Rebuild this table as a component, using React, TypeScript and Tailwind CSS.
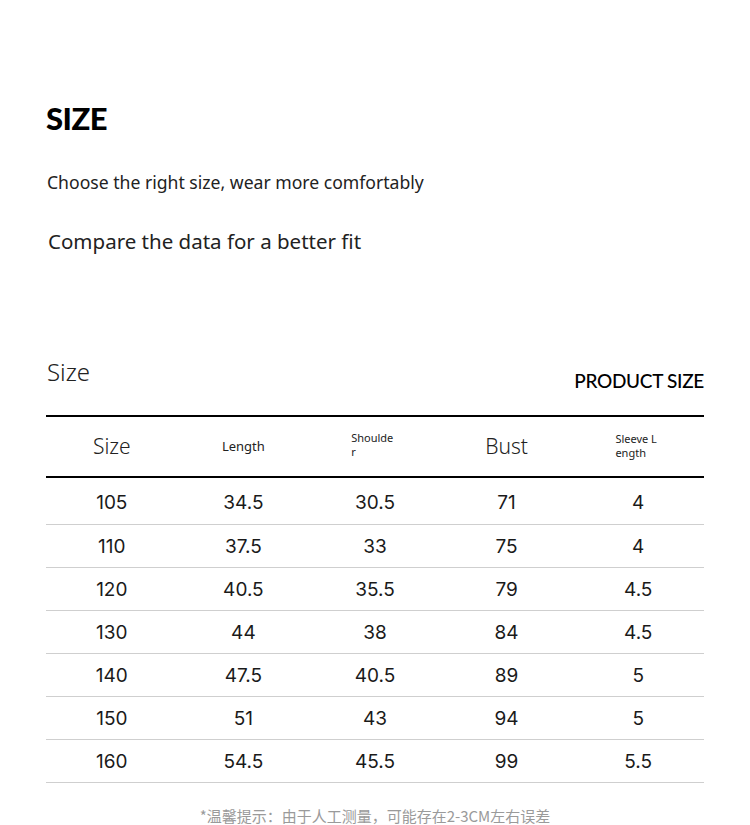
import React from "react";

const rows = [
  ["105", "34.5", "30.5", "71", "4"],
  ["110", "37.5", "33", "75", "4"],
  ["120", "40.5", "35.5", "79", "4.5"],
  ["130", "44", "38", "84", "4.5"],
  ["140", "47.5", "40.5", "89", "5"],
  ["150", "51", "43", "94", "5"],
  ["160", "54.5", "45.5", "99", "5.5"],
];

export default function App() {
  return (
    <div className="w-[750px] h-[825px] bg-white overflow-hidden relative text-[#1a1a1a]">
      <div className="px-[46px] pt-[100px]">
        <h1 className="text-[31px] leading-[36px] font-black tracking-[-0.5px] text-black" style={{ fontFamily: "Lato, sans-serif" }}>
          SIZE
        </h1>
        <p className="mt-[34px] ml-[1px] text-[17.6px] leading-[24px] text-[#222]" style={{ fontFamily: '"Noto Sans", sans-serif' }}>
          Choose the right size, wear more comfortably
        </p>
        <p className="mt-[34px] ml-[2px] text-[20.5px] leading-[26px] text-[#222]" style={{ fontFamily: '"Noto Sans", sans-serif' }}>
          Compare the data for a better fit
        </p>

        <div className="mt-[105px] flex items-end justify-between">
          <div className="text-[24px] leading-[30px] font-light text-[#222] ml-[1px] mt-[-2px]" style={{ fontFamily: '"Noto Sans", sans-serif' }}>
            Size
          </div>
          <div className="text-[19px] leading-[22px] font-medium tracking-[-0.3px] text-black mb-[-5px]" style={{ fontFamily: "Lato, sans-serif" }}>
            PRODUCT SIZE
          </div>
        </div>

        <div className="mt-[28px] w-[658px] border-t-2 border-black">
          <div className="grid grid-cols-5 h-[61px] items-center border-b-2 border-black text-[#222]" style={{ fontFamily: '"Noto Sans", sans-serif' }}>
            <div className="text-center text-[21px] font-light">Size</div>
            <div className="text-center text-[13px]">Length</div>
            <div className="pl-[42px] text-[11px] leading-[14px] mt-[-4px]">Shoulde<br />r</div>
            <div className="text-center text-[21px] font-light">Bust</div>
            <div className="pl-[43px] text-[11px] leading-[14px] mt-[-2px]">Sleeve L<br />ength</div>
          </div>
          {rows.map((r, i) => (
            <div
              key={r[0]}
              className={`grid grid-cols-5 items-center border-b border-[#cfcfcf] text-[19px] text-[#1a1a1a] ${i === 0 ? "h-[47px] pt-[5px]" : "h-[43px] pt-[2px]"}`}
              style={{ fontFamily: "Inter, sans-serif" }}
            >
              {r.map((c, j) => (
                <div key={j} className="text-center">{c}</div>
              ))}
            </div>
          ))}
        </div>
      </div>
      <div
        className="absolute left-0 right-0 top-[808px] text-center text-[15px] leading-[16px] text-[#9a9a9a]"
        style={{ fontFamily: '"Noto Sans CJK SC", sans-serif' }}
      >
        *温馨提示：由于人工测量，可能存在2-3CM左右误差
      </div>
    </div>
  );
}
